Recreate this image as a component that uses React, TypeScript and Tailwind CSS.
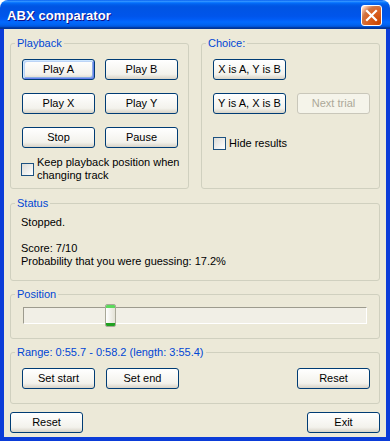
import type { ReactNode } from "react"
import clsx from "clsx"

function XpButton({ children, primary, disabled }: { children: ReactNode; primary?: boolean; disabled?: boolean }) {
  return (
    <button
      className={clsx(
        "h-[21px] w-[73px] shrink-0 rounded-[3px] border text-[11px] leading-[13px]",
        disabled
          ? "border-[#C9C7BA] bg-[#F5F4EA] text-[#ACA899]"
          : "border-[#003C74] bg-gradient-to-b from-white via-[#F3F2EC] via-75% to-[#D8D3C7] text-black",
        primary &&
          "shadow-[inset_1px_1px_0_#CEE7FF,inset_-1px_-1px_0_#6982EE,inset_2px_2px_0_#BCD4F6,inset_-2px_-2px_0_#89ADE4]"
      )}
    >
      {children}
    </button>
  )
}

function CheckBox() {
  return (
    <span className="block h-[13px] w-[13px] shrink-0 border border-[#1C5180] bg-gradient-to-br from-[#DCDCD7] to-white" />
  )
}

function GroupBox({ title, className, children }: { title: string; className: string; children: ReactNode }) {
  return (
    <fieldset className={clsx("rounded-[3px] border border-[#D0D0BF]", className)}>
      <legend className="ml-[4px] px-[2px] text-[#0046D5]">{title}</legend>
      {children}
    </fieldset>
  )
}

export default function App() {
  return (
    <div className="w-[390px] h-[441px] bg-white font-['Liberation_Sans',Arial,sans-serif] text-[11px] leading-[13px] text-black">
      {/* title bar */}
      <div className="flex h-[29px] items-center justify-between rounded-t-[8px] bg-[linear-gradient(to_bottom,#0058EE_0%,#3593FF_4%,#288EFF_6%,#127DFF_8%,#036FFC_10%,#0262EE_14%,#0057E5_20%,#0054E3_24%,#0055EB_56%,#005BF5_66%,#026AFE_76%,#0062EF_86%,#0052D6_92%,#0040AB_94%,#003092_100%)] pl-[7px] pr-[8px]">
        <span className="pt-[1px] font-['Liberation_Sans',Arial,sans-serif] text-[13px] font-bold tracking-[0.1px] text-white [text-shadow:1px_1px_#0F1089]">
          ABX comparator
        </span>
        <div className="mt-[1px] flex h-[21px] w-[21px] items-center justify-center rounded-[3px] border border-white bg-[radial-gradient(circle_at_90%_90%,#CC4600_0%,#DC6527_55%,#CD7546_70%,#FFCCB2_90%,white_100%)]">
          <svg width="13" height="13" viewBox="0 0 13 13">
            <path d="M2 2 L11 11 M11 2 L2 11" stroke="white" strokeWidth="2.2" strokeLinecap="square" />
          </svg>
        </div>
      </div>

      {/* client area */}
      <div className="flex h-[412px] flex-col border-x-4 border-b-4 border-[#0B3CD8] bg-[#ECE9D8] px-[6px] pt-[8px]">
        <div className="flex gap-[12px]">
          <GroupBox title="Playback" className="h-[152px] w-[179px]">
            <div className="pl-[11px] pt-[9px]">
              <div className="grid grid-cols-[73px_73px] gap-x-[10px] gap-y-[13px]">
                <XpButton primary>Play A</XpButton>
                <XpButton>Play B</XpButton>
                <XpButton>Play X</XpButton>
                <XpButton>Play Y</XpButton>
                <XpButton>Stop</XpButton>
                <XpButton>Pause</XpButton>
              </div>
              <div className="ml-[-1px] mt-[8px] flex items-center gap-[3px]">
                <CheckBox />
                <span className="whitespace-nowrap">
                  Keep playback position when
                  <br />
                  changing track
                </span>
              </div>
            </div>
          </GroupBox>

          <GroupBox title="Choice:" className="h-[152px] w-[179px]">
            <div className="pl-[11px] pt-[9px]">
              <div className="flex flex-col gap-[13px]">
                <XpButton>X is A, Y is B</XpButton>
                <div className="flex gap-[11px]">
                  <XpButton>Y is A, X is B</XpButton>
                  <XpButton disabled>Next trial</XpButton>
                </div>
              </div>
              <div className="mt-[23px] flex items-center gap-[3px]">
                <CheckBox />
                <span>Hide results</span>
              </div>
            </div>
          </GroupBox>
        </div>

        <GroupBox title="Status" className="mt-[8px] h-[84px] w-[370px]">
          <div className="pl-[10px] pt-[6px]">
            <p>Stopped.</p>
            <p>&nbsp;</p>
            <p>Score: 7/10</p>
            <p>Probability that you were guessing: 17.2%</p>
          </div>
        </GroupBox>

        <GroupBox title="Position" className="mt-[7px] h-[51px] w-[370px]">
          <div className="px-[12px] pt-[6px]">
            <div className="relative h-[17px] border border-t-[#9D9B8E] border-l-[#9D9B8E] border-b-white border-r-white bg-[#F1EFE6]">
              <div className="absolute left-[81px] top-[-4px] flex h-[23px] w-[11px] flex-col overflow-hidden rounded-[2px] border border-[#A9A898] bg-gradient-to-r from-white to-[#E4E2D6]">
                <div className="h-[3px] bg-[#5CD85C]" />
                <div className="flex-1" />
                <div className="h-[3px] bg-[#21A121]" />
              </div>
            </div>
          </div>
        </GroupBox>

        <GroupBox title="Range: 0:55.7 - 0:58.2 (length: 3:55.4)" className="mt-[7px] h-[58px] w-[370px]">
          <div className="flex pl-[11px] pr-[9px] pt-[9px]">
            <XpButton>Set start</XpButton>
            <div className="ml-[11px]">
              <XpButton>Set end</XpButton>
            </div>
            <div className="ml-auto">
              <XpButton>Reset</XpButton>
            </div>
          </div>
        </GroupBox>

        <div className="mt-[8px] flex w-[370px] justify-between">
          <XpButton>Reset</XpButton>
          <XpButton>Exit</XpButton>
        </div>
      </div>
    </div>
  )
}
